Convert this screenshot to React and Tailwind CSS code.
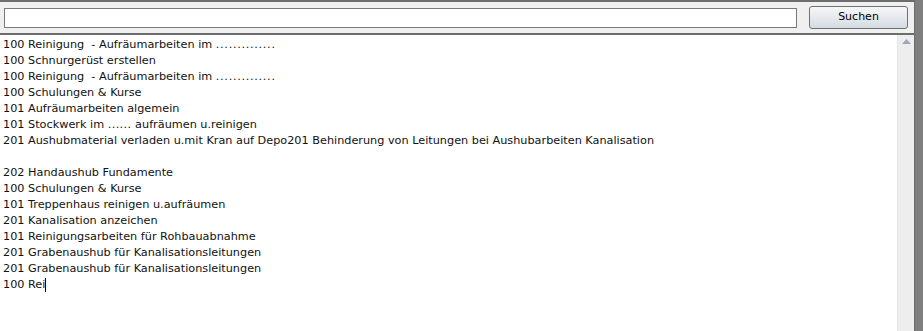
export default function App() {
  const dots = <span className="tracking-[0.7px]">..............</span>
  const lines = [
    <>100 Reinigung  - Aufräumarbeiten im {dots}</>,
    '100 Schnurgerüst erstellen',
    <>100 Reinigung  - Aufräumarbeiten im {dots}</>,
    '100 Schulungen & Kurse',
    '101 Aufräumarbeiten algemein',
    <>101 Stockwerk im <span className="tracking-[0.4px]">......</span> aufräumen u.reinigen</>,
    '201 Aushubmaterial verladen u.mit Kran auf Depo201 Behinderung von Leitungen bei Aushubarbeiten Kanalisation',
    '',
    '202 Handaushub Fundamente',
    '100 Schulungen & Kurse',
    '101 Treppenhaus reinigen u.aufräumen',
    '201 Kanalisation anzeichen',
    '101 Reinigungsarbeiten für Rohbauabnahme',
    '201 Grabenaushub für Kanalisationsleitungen',
    '201 Grabenaushub für Kanalisationsleitungen',
  ]

  return (
    <div className="flex h-[331px] w-[923px] overflow-hidden bg-white" style={{ fontFamily: '"DejaVu Sans", sans-serif' }}>
      <div className="flex min-w-0 flex-1 flex-col border-r border-[#6d6d6d]">
        <div className="flex h-[35px] items-center gap-3 border-y-2 border-[#6d6d6d] bg-[#f0f0f0] pl-1 pr-[6px]">
          <input type="text" className="h-[20px] flex-1 border border-[#7a7a7a] bg-white outline-none" />
          <button className="h-[23px] w-[99px] rounded-[3px] border border-[#707070] bg-gradient-to-b from-[#f6f6f6] via-[#e6eaee] to-[#d4dbe2] text-[11px] text-black">
            Suchen
          </button>
        </div>
        <div className="flex min-h-0 flex-1">
          <div className="flex-1 whitespace-pre pl-[3px] pt-[2px] text-[11.25px] leading-[16px] text-[#111]">
            {lines.map((l, i) => (
              <div key={i} className="h-[16px]">{l}</div>
            ))}
            <div className="h-[16px]">100 Rei<span className="mt-[1px] inline-block h-[14px] w-px bg-black align-top" /></div>
          </div>
          <div className="flex w-[17px] flex-col items-center border-l border-[#e6e6e6] bg-[#eeeeee] pt-[4px]">
            <svg width="9" height="5" viewBox="0 0 9 5"><path d="M0 5 L4.5 0 L9 5 Z" fill="#9aa9c2" /></svg>
          </div>
        </div>
      </div>
      <div className="w-[8px] bg-[#7f7f7f]" />
    </div>
  )
}
